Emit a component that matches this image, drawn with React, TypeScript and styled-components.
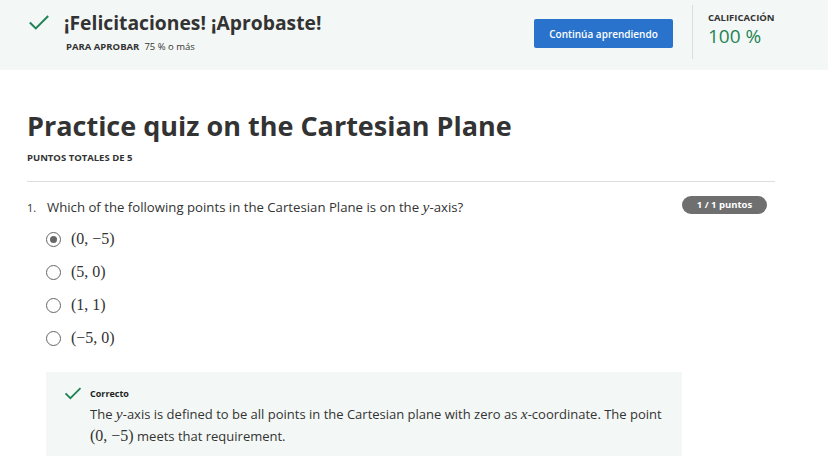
import React from "react";
import styled, { createGlobalStyle } from "styled-components";

const Global = createGlobalStyle`
  html, body { margin: 0; padding: 0; background: #fff; }
  body { font-family: "Open Sans", "Liberation Sans", sans-serif; color: #1f1f1f; }
  * { box-sizing: border-box; }
`;

const Banner = styled.header`
  height: 70px;
  background: #f3f8f6;
  display: flex;
  align-items: flex-start;
  padding: 0 0 0 28px;
`;

const BannerLeft = styled.div`
  display: flex;
  align-items: flex-start;
  gap: 14px;
  padding-top: 11px;
  flex: 1;
`;

const CheckIcon = styled.svg<{ $size: number }>`
  width: ${(p) => p.$size}px;
  height: ${(p) => p.$size}px;
  flex: none;
`;

const BannerText = styled.div`
  display: flex;
  flex-direction: column;
  margin-top: -1px;
`;

const BannerTitle = styled.h1`
  margin: 0;
  font-size: 19.3px;
  line-height: 26px;
  font-weight: 700;
  color: #333;
`;

const PassLine = styled.div`
  font-size: 9.5px;
  line-height: 14px;
  margin-top: 4px;
  padding-left: 2px;
  color: #333;
  display: flex;
  gap: 5px;
`;

const PassLabel = styled.span`
  font-weight: 700;
`;

const ContinueButton = styled.button`
  margin-top: 19px;
  margin-right: 19px;
  width: 139px;
  height: 29px;
  border: none;
  border-radius: 2px;
  background: #2a73cc;
  color: #fff;
  font-family: inherit;
  font-size: 10px;
  font-weight: 600;
  padding: 0;
`;

const GradeBox = styled.div`
  margin-top: 5px;
  height: 54px;
  width: 136px;
  border-left: 1px solid #dcdcdc;
  padding: 6px 0 0 15px;
  display: flex;
  flex-direction: column;
`;

const GradeLabel = styled.div`
  font-size: 9.5px;
  line-height: 14px;
  font-weight: 700;
  color: #333;
`;

const GradeValue = styled.div`
  font-size: 19px;
  line-height: 22px;
  color: #1f8354;
`;

const Main = styled.main`
  padding: 38px 53px 0 27px;
`;

const QuizTitle = styled.h2`
  margin: 0;
  font-size: 27px;
  line-height: 36px;
  font-weight: 700;
  color: #333;
`;

const TotalPoints = styled.div`
  margin-top: 7px;
  font-size: 9.5px;
  font-weight: 700;
  line-height: 14px;
  color: #333;
`;

const Rule = styled.hr`
  margin: 16px 0 0;
  border: none;
  border-top: 1px solid #dedede;
`;

const QuestionRow = styled.div`
  margin-top: 14px;
  display: flex;
  align-items: center;
  height: 22px;
`;

const QNum = styled.span`
  width: 20px;
  font-size: 11px;
  color: #333;
`;

const QText = styled.span`
  flex: 1;
  font-size: 13.2px;
  color: #333;
`;

const Badge = styled.span`
  margin: 0 8px 5px 0;
  width: 85px;
  height: 18px;
  border-radius: 9px;
  background: #6f6f6f;
  color: #fff;
  font-size: 9.5px;
  font-weight: 700;
  display: flex;
  align-items: center;
  justify-content: center;
`;

const Math = styled.span`
  font-family: "Liberation Serif", "DejaVu Serif", serif;
  font-size: 16px;
  line-height: 1;
`;

const MathVar = styled.span`
  font-family: "Liberation Serif", serif;
  font-style: italic;
  font-size: 15.5px;
  line-height: 1;
`;

const Options = styled.div`
  margin-top: 10px;
  padding-left: 19px;
  display: flex;
  flex-direction: column;
  gap: 11px;
`;

const Option = styled.label`
  display: flex;
  align-items: center;
  gap: 10px;
  height: 22px;
  color: #333;
`;

const Radio = styled.span<{ $checked?: boolean }>`
  width: 15px;
  height: 15px;
  border-radius: 50%;
  border: 1.5px solid #666;
  display: flex;
  align-items: center;
  justify-content: center;
  &::after {
    content: "";
    width: 7px;
    height: 7px;
    border-radius: 50%;
    background: ${(p) => (p.$checked ? "#666" : "transparent")};
  }
`;

const Feedback = styled.section`
  margin: 23px 93px 0 19px;
  background: #f3f8f6;
  padding: 12px 4px 9px 18px;
  display: flex;
  gap: 8px;
`;

const FeedbackBody = styled.div`
  display: flex;
  flex-direction: column;
`;

const FeedbackTitle = styled.div`
  font-size: 9px;
  font-weight: 700;
  line-height: 19px;
  color: #1f1f1f;
`;

const FeedbackText = styled.p`
  margin: 0;
  font-size: 13px;
  line-height: 22px;
  color: #333;
`;

const Check = ({ size, w }: { size: number; w: number }) => (
  <CheckIcon $size={size} viewBox="0 0 24 24">
    <path d="M2 12.5 L8.5 19 L22 5.5" fill="none" stroke="#1f8354" strokeWidth={w} />
  </CheckIcon>
);

const options = ["(0, −5)", "(5, 0)", "(1, 1)", "(−5, 0)"];

export default function App() {
  return (
    <>
      <Global />
      <Banner>
        <BannerLeft>
          <Check size={22} w={2.2} />
          <BannerText>
            <BannerTitle>¡Felicitaciones! ¡Aprobaste!</BannerTitle>
            <PassLine>
              <PassLabel>PARA APROBAR</PassLabel>
              <span>75 % o más</span>
            </PassLine>
          </BannerText>
        </BannerLeft>
        <ContinueButton>Continúa aprendiendo</ContinueButton>
        <GradeBox>
          <GradeLabel>CALIFICACIÓN</GradeLabel>
          <GradeValue>100 %</GradeValue>
        </GradeBox>
      </Banner>
      <Main>
        <QuizTitle>Practice quiz on the Cartesian Plane</QuizTitle>
        <TotalPoints>PUNTOS TOTALES DE 5</TotalPoints>
        <Rule />
        <QuestionRow>
          <QNum>1.</QNum>
          <QText>
            Which of the following points in the Cartesian Plane is on the <MathVar>y</MathVar>-axis?
          </QText>
          <Badge>1 / 1 puntos</Badge>
        </QuestionRow>
        <Options>
          {options.map((o, i) => (
            <Option key={o}>
              <Radio $checked={i === 0} />
              <Math>{o}</Math>
            </Option>
          ))}
        </Options>
        <Feedback>
          <Check size={18} w={2.4} />
          <FeedbackBody>
            <FeedbackTitle>Correcto</FeedbackTitle>
            <FeedbackText>
              The <MathVar>y</MathVar>-axis is defined to be all points in the Cartesian plane with zero as{" "}
              <MathVar>x</MathVar>-coordinate. The point <Math>(0, −5)</Math> meets that requirement.
            </FeedbackText>
          </FeedbackBody>
        </Feedback>
      </Main>
    </>
  );
}
